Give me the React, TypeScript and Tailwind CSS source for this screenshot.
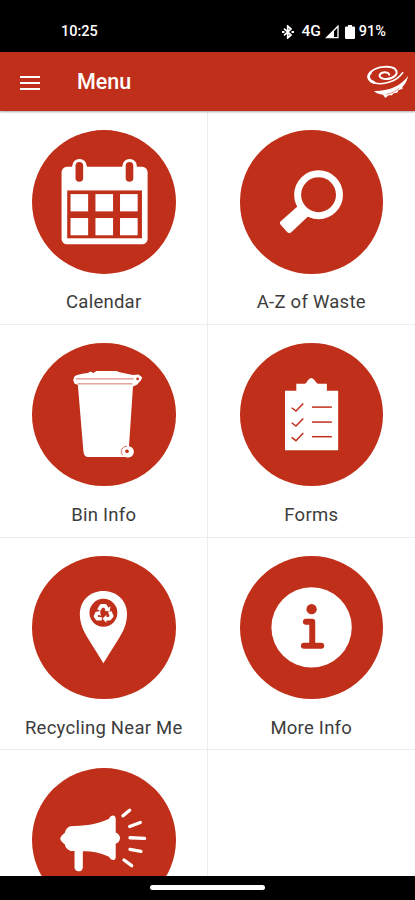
import type { ReactNode } from "react";

const RED = "#c02f19";

function CalendarIcon() {
  return (
    <svg viewBox="36 30 432 432" className="w-full h-full">
      <rect x="125" y="141" width="259" height="233" rx="16" fill="#fff" />
      <rect x="157" y="117" width="44" height="76" rx="22" fill="#fff" />
      <rect x="308" y="117" width="44" height="76" rx="22" fill="#fff" />
      <rect x="167" y="126" width="23" height="60" rx="11.5" fill={RED} />
      <rect x="318" y="126" width="23" height="60" rx="11.5" fill={RED} />
      <rect x="142" y="212" width="225" height="144" fill={RED} />
      {[152, 227, 301].map((x) => (
        <g key={x} fill="#fff">
          <rect x={x} y="223" width="53" height="52" />
          <rect x={x} y="295" width="53" height="52" />
        </g>
      ))}
    </svg>
  );
}

function SearchIcon() {
  return (
    <svg viewBox="34.5 30 432 432" className="w-full h-full">
      <circle cx="271" cy="225" r="63" fill="none" stroke="#fff" strokeWidth="21" />
      <path d="M209 259Q220 279 240 290L189 338Q183 343 177 338L157 315Q152 309 158 304Z" fill="#fff" />
    </svg>
  );
}

function BinIcon() {
  return (
    <svg viewBox="36 24 432 432" className="w-full h-full">
      <path
        d="M160 136L164 124Q178 116 204 114L212 110L220 114L230 108H290L300 112L340 120L357 119L368 128L364 136L352 150L340 155L328 335A17 17 0 1 1 318 367H203Q193 365 191 352L174 150L164 147Z"
        fill="#fff"
      />
      <g fill="none" stroke={RED}>
        <path d="M168 132H342M174 147H338" strokeWidth="2" />
        <path d="M309 362A16 16 0 0 1 322 335" strokeWidth="2" />
      </g>
      <circle cx="354" cy="132" r="4" fill={RED} />
      <circle cx="322" cy="350" r="5.5" fill={RED} />
    </svg>
  );
}

function FormsIcon() {
  return (
    <svg viewBox="34.5 24 432 432" className="w-full h-full">
      <path d="M170 168H204V147H230Q236 144 238 137Q249 121 260 137Q263 144 269 147H296V168H330V347H170Z" fill="#fff" />
      {[217, 262, 306].map((y) => (
        <g key={y} fill="none" stroke={RED} strokeWidth="4.5">
          <path d={`M190 ${y + 2}L203 ${y + 12}L225 ${y - 11}`} />
          <path d={`M251 ${y}H311`} />
        </g>
      ))}
    </svg>
  );
}

function RecyclingIcon() {
  return (
    <svg viewBox="36 32 432 432" className="w-full h-full">
      <path d="M251 355L208 286C191 258 180 236 180 207C180 165 211 137 251 137S322 165 322 207C322 236 311 258 294 286Z" fill="#fff" />
      <circle cx="251" cy="203" r="42" fill={RED} />
      <g fill="none" stroke="#fff" strokeWidth="11" strokeLinejoin="round">
        <path d="M237 195L245 182H256L263 193" />
        <path d="M270 200L276 213L269 221H255" />
        <path d="M246 221H233L227 213L234 202" />
      </g>
      <g fill="#fff">
        <path d="M254 196L270 200L272 183Z" />
        <path d="M260 209V233L248 221Z" />
        <path d="M225 202L241 197L243 213Z" />
      </g>
    </svg>
  );
}

function InfoIcon() {
  return (
    <svg viewBox="34.5 32 432 432" className="w-full h-full">
      <circle cx="250" cy="247" r="121" fill="#fff" />
      <circle cx="250" cy="192" r="15.5" fill={RED} />
      <path d="M233 230H252V302M227 302H279" fill="none" stroke={RED} strokeWidth="18" strokeLinecap="round" strokeLinejoin="round" />
    </svg>
  );
}

function MegaphoneIcon() {
  return (
    <svg viewBox="96 54 432 432" className="w-full h-full">
      <path
        d="M181 267Q181 260 195 249Q197 235 210 229C250 229 290 225 328 207Q332 197 340 197Q348 198 348 208V248Q361 254 361 265Q361 277 348 282V322Q348 331 341 331Q333 331 328 321C300 309 275 304 249 305V354Q247 365 236 365Q226 364 224 354V304H212Q197 297 195 284Q181 273 181 267Z"
        fill="#fff"
      />
      <path d="M370 198L390 181M390 230L422 218M391 264L435 266M391 299L424 305M373 331L396 348" stroke="#fff" strokeWidth="10" strokeLinecap="round" />
    </svg>
  );
}

function Logo() {
  return (
    <svg viewBox="480 195 126 105" className="w-[42px] h-[35px]">
      <g fill="none" stroke="#fff" strokeLinecap="round">
        <path d="M503 252C483 246 479 230 492 218C510 202 551 198 565 211C578 225 557 240 537 240C518 240 512 228 524 222C533 218 545 220 547 227" strokeWidth="6" />
        <path d="M503 252C529 259 568 248 587 221" strokeWidth="5" />
        <path d="M500 250C484 244 481 231 490 222" strokeWidth="8" />
      </g>
      <path d="M501 276C541 277 582 262 603 231C600 248 593 257 586 264L587 269L574 274L571 281L560 283L555 289L545 289L535 297L528 287C516 287 507 282 501 276Z" fill="#fff" />
      <path d="M538 286C554 283 566 277 577 267" fill="none" stroke={RED} strokeWidth="1.5" />
    </svg>
  );
}

function StatusBar() {
  return (
    <div className="h-[52px] shrink-0 bg-black text-white flex items-center pl-[61px] pr-[29px] pt-3 text-[14.5px] font-medium">
      <span>10:25</span>
      <div className="ml-auto flex items-center">
        <svg viewBox="0 0 14 14" className="w-[14px] h-[14px] mr-[6px]" fill="none" stroke="#fff" strokeWidth="1.7">
          <path d="M3 3.7L10 10L6.7 13V1L10 4L3 10.3" />
          <path d="M1 7H3.5M10.5 7H13" strokeWidth="2.2" />
        </svg>
        <span className="text-[15.5px]">4G</span>
        <svg viewBox="0 0 14 14" className="w-[14px] h-[14px] ml-[4px]">
          <path d="M1.5 12.7L13 1.2V12.7Z" fill="none" stroke="#fff" strokeWidth="1.3" />
          <path d="M1 13L9 5V13Z" fill="#fff" />
        </svg>
        <svg viewBox="0 0 10 14" className="w-[10px] h-[14px] ml-[6px] mr-[4px]" fill="#fff">
          <path d="M3 0H7V1.5H9Q10 1.5 10 2.5V13Q10 14 9 14H1Q0 14 0 13V2.5Q0 1.5 1 1.5H3Z" />
        </svg>
        <span>91%</span>
      </div>
    </div>
  );
}

function Tile({ label, children }: { label?: string; children?: ReactNode }) {
  return (
    <div className="h-[212.75px] flex flex-col items-center pt-[18px] border-b border-[#ededed] odd:border-r odd:pl-px">
      {children && (
        <div className="w-[143.5px] h-[143.5px] shrink-0 rounded-full bg-[#c02f19]">{children}</div>
      )}
      {label && (
        <span className="mt-[15.5px] text-[18.5px] leading-[26px] tracking-[0.25px] text-[#3c3c3c] whitespace-nowrap">
          {label}
        </span>
      )}
    </div>
  );
}

export default function App() {
  return (
    <div className="w-[415px] h-[900px] flex flex-col overflow-hidden bg-white font-['Roboto',sans-serif]">
      <StatusBar />
      <header className="relative z-10 h-[59px] shrink-0 flex items-center pl-5 pr-[6px] bg-[#c02f19] text-white shadow-[0_1px_2px_rgba(0,0,0,0.35)]">
        <button aria-label="Open menu" className="w-5 flex flex-col gap-[4px] mt-[2px]">
          <span className="h-[2px] bg-white" />
          <span className="h-[2px] bg-white" />
          <span className="h-[2px] bg-white" />
        </button>
        <h1 className="ml-[37px] mt-px text-[21.5px] font-medium">Menu</h1>
        <div className="ml-auto">
          <Logo />
        </div>
      </header>
      <main className="flex-1 min-h-0 overflow-hidden grid grid-cols-2 content-start pt-px">
        <Tile label="Calendar">
          <CalendarIcon />
        </Tile>
        <Tile label="A-Z of Waste">
          <SearchIcon />
        </Tile>
        <Tile label="Bin Info">
          <BinIcon />
        </Tile>
        <Tile label="Forms">
          <FormsIcon />
        </Tile>
        <Tile label="Recycling Near Me">
          <RecyclingIcon />
        </Tile>
        <Tile label="More Info">
          <InfoIcon />
        </Tile>
        <Tile>
          <MegaphoneIcon />
        </Tile>
        <Tile />
      </main>
      <nav className="h-[24px] shrink-0 bg-black flex justify-center pt-[9px]">
        <div className="w-[115px] h-[5px] rounded-full bg-white" />
      </nav>
    </div>
  );
}
